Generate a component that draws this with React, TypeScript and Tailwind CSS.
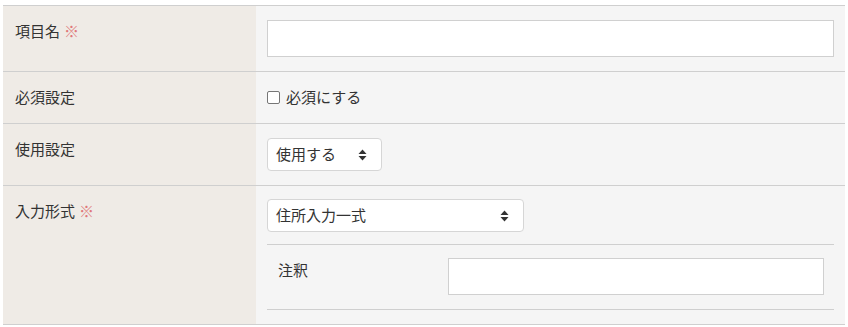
import React from 'react';

const Req = () => <span className="text-[#e0787a] ml-1">※</span>;

const Arrows = () => (
  <svg width="9" height="12" viewBox="0 0 9 12" className="shrink-0">
    <path d="M4.5 0.5 L8.5 5 H0.5 Z" fill="#333" />
    <path d="M4.5 11.5 L8.5 7 H0.5 Z" fill="#333" />
  </svg>
);

const Select: React.FC<{ label: string; width: string }> = ({ label, width }) => (
  <div className={`${width} h-[33px] bg-white border border-[#d6d6d6] rounded-[4px] flex items-center justify-between pl-[8px] pr-[14px]`}>
    <span>{label}</span>
    <Arrows />
  </div>
);

const Row: React.FC<{ label: React.ReactNode; children: React.ReactNode; last?: boolean; pad?: string }> = ({ label, children, last, pad }) => (
  <div className={`flex ${last ? '' : 'border-b border-[#cfcfcf]'}`}>
    <div className="w-[253px] shrink-0 bg-[#efebe6] pl-[12px] pt-[14px] leading-[22px]">{label}</div>
    <div className={`flex-1 bg-[#f5f5f5] px-[11px] ${pad ?? 'py-[14px]'}`}>{children}</div>
  </div>
);

export default function App() {
  return (
    <div className="w-[848px] h-[327px] bg-white pt-[5px] pl-[3px] pr-[3px] text-[15px] text-[#333]" style={{ fontFamily: '"Noto Sans CJK JP", "Noto Sans", sans-serif' }}>
      <div className="border-t border-b border-[#cfcfcf]">
        <Row label={<>項目名<Req /></>}>
          <div className="h-[37px] bg-white border border-[#d0d0d0]" />
        </Row>
        <Row label="必須設定">
          <label className="flex items-center h-[23px]">
            <span className="w-[13px] h-[13px] border border-[#767676] rounded-[2px] bg-white mr-[6px]" />
            必須にする
          </label>
        </Row>
        <Row label="使用設定">
          <Select label="使用する" width="w-[115px]" />
        </Row>
        <Row label={<>入力形式<Req /></>} last pad="pt-[13px] pb-[14px]">
          <Select label="住所入力一式" width="w-[257px]" />
          <div className="mt-[12px] border-t border-b border-[#cfcfcf] flex pt-[13px] pb-[14px]">
            <div className="w-[181px] pl-[11px] pt-[1px] leading-[22px]">注釈</div>
            <div className="w-[376px] h-[37px] bg-white border border-[#d0d0d0]" />
          </div>
        </Row>
      </div>
    </div>
  );
}
